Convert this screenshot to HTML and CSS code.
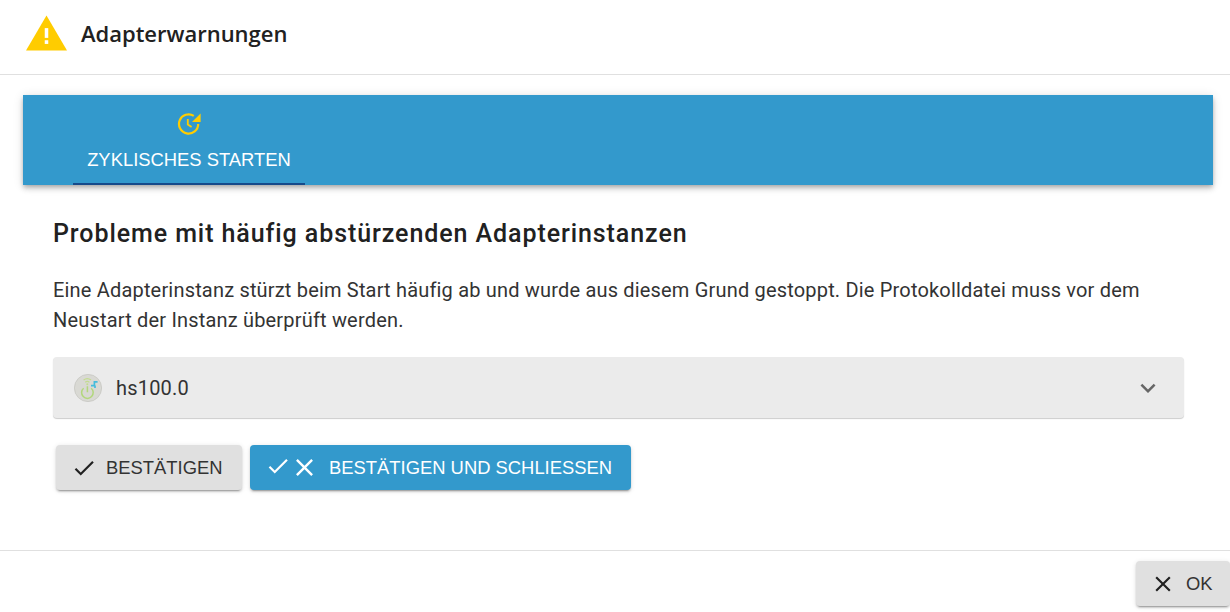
FILE: index.html
```html
<!DOCTYPE html>
<html lang="de">
<head>
<meta charset="utf-8">
<title>Adapterwarnungen</title>
<link rel="stylesheet" href="styles.css">
</head>
<body>
<div class="dialog">
  <header class="head">
    <svg class="warn" viewBox="0 0 42 36"><path fill="#ffcc00" d="M21 0 L42 36 H0 Z"/><rect x="19.2" y="13" width="3.6" height="10" fill="#fff"/><rect x="19.2" y="25.4" width="3.6" height="3.8" fill="#fff"/></svg>
    <h1 class="title">Adapterwarnungen</h1>
  </header>
  <main class="body">
    <nav class="tabs">
      <div class="tab">
        <svg class="tab-icon" viewBox="0 0 24 24"><path fill="none" stroke="#ffcc00" stroke-width="2.2" d="M21.2 12A9.6 9.6 0 1 1 16.8 3.9"/><path fill="#ffcc00" d="M23.6 1.4v8.6h-8.6z"/><path fill="none" stroke="#ffcc00" stroke-width="1.8" d="M10.8 7v5.6l3.8 2.4"/></svg>
        <span class="tab-label">ZYKLISCHES STARTEN</span>
      </div>
    </nav>
    <section class="panel">
      <h2 class="heading">Probleme mit häufig abstürzenden Adapterinstanzen</h2>
      <p class="text">Eine Adapterinstanz stürzt beim Start häufig ab und wurde aus diesem Grund gestoppt. Die Protokolldatei muss vor dem Neustart der Instanz überprüft werden.</p>
      <div class="accordion">
        <svg class="logo" viewBox="0 0 28 28">
          <circle cx="14" cy="14" r="13.6" fill="#d9d9d4" stroke="#c6c6c2" stroke-width=".8"/>
          <path fill="none" stroke="#c3dc8f" stroke-width="1.2" d="M9.6 6a6.2 6.2 0 0 1 7.4 0M11.2 8.2a3.6 3.6 0 0 1 4.2 0"/>
          <circle cx="13.3" cy="10.2" r="1" fill="#c3dc8f"/>
          <path fill="none" stroke="#b2d77c" stroke-width="1.5" d="M9.6 14.2a5.8 5.8 0 1 0 7.6 0M13.4 12.2v6"/>
          <path fill="none" stroke="#45bcdc" stroke-width="1.7" d="M17 11.6h3.4V7.8h3.2M21 11.6v2.4"/>
        </svg>
        <span class="acc-label">hs100.0</span>
        <svg class="chev" viewBox="0 0 24 24"><path fill="#666" d="M16.59 8.59 12 13.17 7.41 8.59 6 10l6 6 6-6z"/></svg>
      </div>
      <div class="actions">
        <button class="btn btn-grey"><svg class="ic" viewBox="0 0 24 24"><path fill="#212121" d="M9 16.17 4.83 12l-1.42 1.41L9 19 21 7l-1.41-1.41z"/></svg><span>BESTÄTIGEN</span></button>
        <button class="btn btn-blue"><svg class="ic ic-up" viewBox="0 0 24 24"><path fill="#fff" d="M9 16.17 4.83 12l-1.42 1.41L9 19 21 7l-1.41-1.41z"/></svg><svg class="ic ic-x" viewBox="0 0 24 24"><path fill="#fff" d="M19 6.41 17.59 5 12 10.59 6.41 5 5 6.41 10.59 12 5 17.59 6.41 19 12 13.41 17.59 19 19 17.59 13.41 12z"/></svg><span class="blue-label">BESTÄTIGEN UND SCHLIESSEN</span></button>
      </div>
    </section>
  </main>
  <footer class="foot">
    <button class="btn btn-grey btn-ok"><svg class="ic" viewBox="0 0 24 24"><path fill="#212121" d="M19 6.41 17.59 5 12 10.59 6.41 5 5 6.41 10.59 12 5 17.59 6.41 19 12 13.41 17.59 19 19 17.59 13.41 12z"/></svg><span>OK</span></button>
  </footer>
</div>
</body>
</html>
```
FILE: styles.css
```css
* { box-sizing: border-box; }
html, body { margin: 0; height: 100%; background: #fff; overflow: hidden; }
body { font-family: Roboto, "Liberation Sans", sans-serif; color: #212121; }
.dialog { width: 1230px; height: 612px; display: flex; flex-direction: column; }
.head { height: 75px; display: flex; align-items: center; padding: 0 0 8px 26px; border-bottom: 1px solid #e0e0e0; }
.warn { width: 41px; height: 36px; }
.title { margin: 0 0 0 14px; font: 600 22px "Open Sans", sans-serif; color: #212121; letter-spacing: -0.01px; }
.body { height: 476px; padding: 20px 17px 0 23px; border-bottom: 1px solid #e0e0e0; }
.tabs { height: 90px; background: #3399cc; display: flex; padding-left: 50px; box-shadow: 0 2px 4px -1px rgba(0,0,0,.2), 0 4px 5px rgba(0,0,0,.14), 0 1px 10px rgba(0,0,0,.12); }
.tab { width: 232px; display: flex; flex-direction: column; align-items: center; padding-top: 17px; border-bottom: 2px solid #164a8a; }
.tab-icon { width: 24px; height: 24px; }
.tab-label { margin-top: 13px; color: #fff; font: 400 18.4px "Liberation Sans", Arial, sans-serif; white-space: nowrap; }
.panel { padding: 31px 30px 0; }
.heading { margin: 0; font: 500 25px/36px Roboto, sans-serif; letter-spacing: .92px; color: #212121; }
.text { margin: 23px 0 0; font: 400 20px/30px Roboto, sans-serif; color: #333; letter-spacing: .18px; width: 1110px; }
.accordion { margin-top: 22px; width: 1131px; height: 61px; background: #ebebeb; border-radius: 4px; display: flex; align-items: center; padding: 0 21px 0 21px; box-shadow: 0 1px 1px rgba(0,0,0,.2); }
.logo { width: 28px; height: 28px; }
.acc-label { margin-left: 14px; font-size: 20px; color: #333; flex: 1; letter-spacing: .2px; }
.chev { width: 30px; height: 30px; }
.actions { display: flex; gap: 8px; margin: 27px 0 0 3px; }
.btn { border: 0; border-radius: 4px; height: 45px; display: flex; align-items: center; font: 400 18.4px "Liberation Sans", Arial, sans-serif; box-shadow: 0 3px 1px -2px rgba(0,0,0,.2), 0 2px 2px rgba(0,0,0,.14), 0 1px 5px rgba(0,0,0,.12); padding: 0; white-space: nowrap; }
.btn-grey { background: #e0e0e0; color: #333; width: 186px; padding-left: 15px; }
.btn-grey .ic { margin-right: 9px; }
.btn-blue { background: #3399cc; color: #fff; width: 381px; padding-left: 15px; }
.ic { width: 26px; height: 26px; flex: none; }
.ic-up { margin-top: -4px; }
.ic-x { width: 29px; height: 29px; margin-left: -1px; }
.blue-label { margin-left: 10px; }
.foot { flex: 1; display: flex; justify-content: flex-end; padding-top: 10px; }
.btn-ok { width: 94px; padding-left: 14px; }
.btn-ok .ic { margin-right: 10px; }
```
